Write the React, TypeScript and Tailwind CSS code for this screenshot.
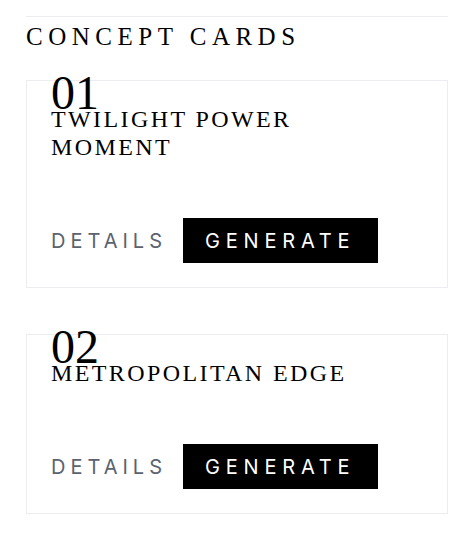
const concepts = [
    { id: "01", title: "TWILIGHT POWER MOMENT" },
    { id: "02", title: "METROPOLITAN EDGE" }
];

function ConceptCard({ id, title }: { id: string; title: string }) {
    return (
        <div className="relative border border-[#ececf1] p-6">
            <span className="absolute left-6 top-[-12px] font-['Liberation_Serif',serif] text-[48px] leading-none text-black">
                {id}
            </span>

            <h3 className="relative max-w-[320px] font-['Liberation_Serif',serif] text-[24px] leading-[28px] tracking-[0.1em] text-black">
                {title}
            </h3>

            <div className="mt-[57px] flex items-center gap-4 font-['Inter',sans-serif]">
                <button className="text-[20px] tracking-[0.25em] text-[#5b6270]">
                    DETAILS
                </button>
                <button className="h-[45px] w-[195px] bg-black pl-[22px] text-left text-[20px] tracking-[0.29em] text-white">
                    GENERATE
                </button>
            </div>
        </div>
    );
}

export default function App() {
    return (
        <div className="min-h-[550px] bg-white pl-[26px] pr-[28px] pt-4">
            <div className="border-t border-[#ececf1] pt-[4px]">
                <h2 className="font-['Liberation_Serif',serif] text-[25px] leading-8 tracking-[0.22em] text-black">
                    CONCEPT CARDS
                </h2>

                <div className="mt-[27px] flex flex-col gap-[46px]">
                    {concepts.map(c => (
                        <ConceptCard key={c.id} id={c.id} title={c.title} />
                    ))}
                </div>
            </div>
        </div>
    );
}
